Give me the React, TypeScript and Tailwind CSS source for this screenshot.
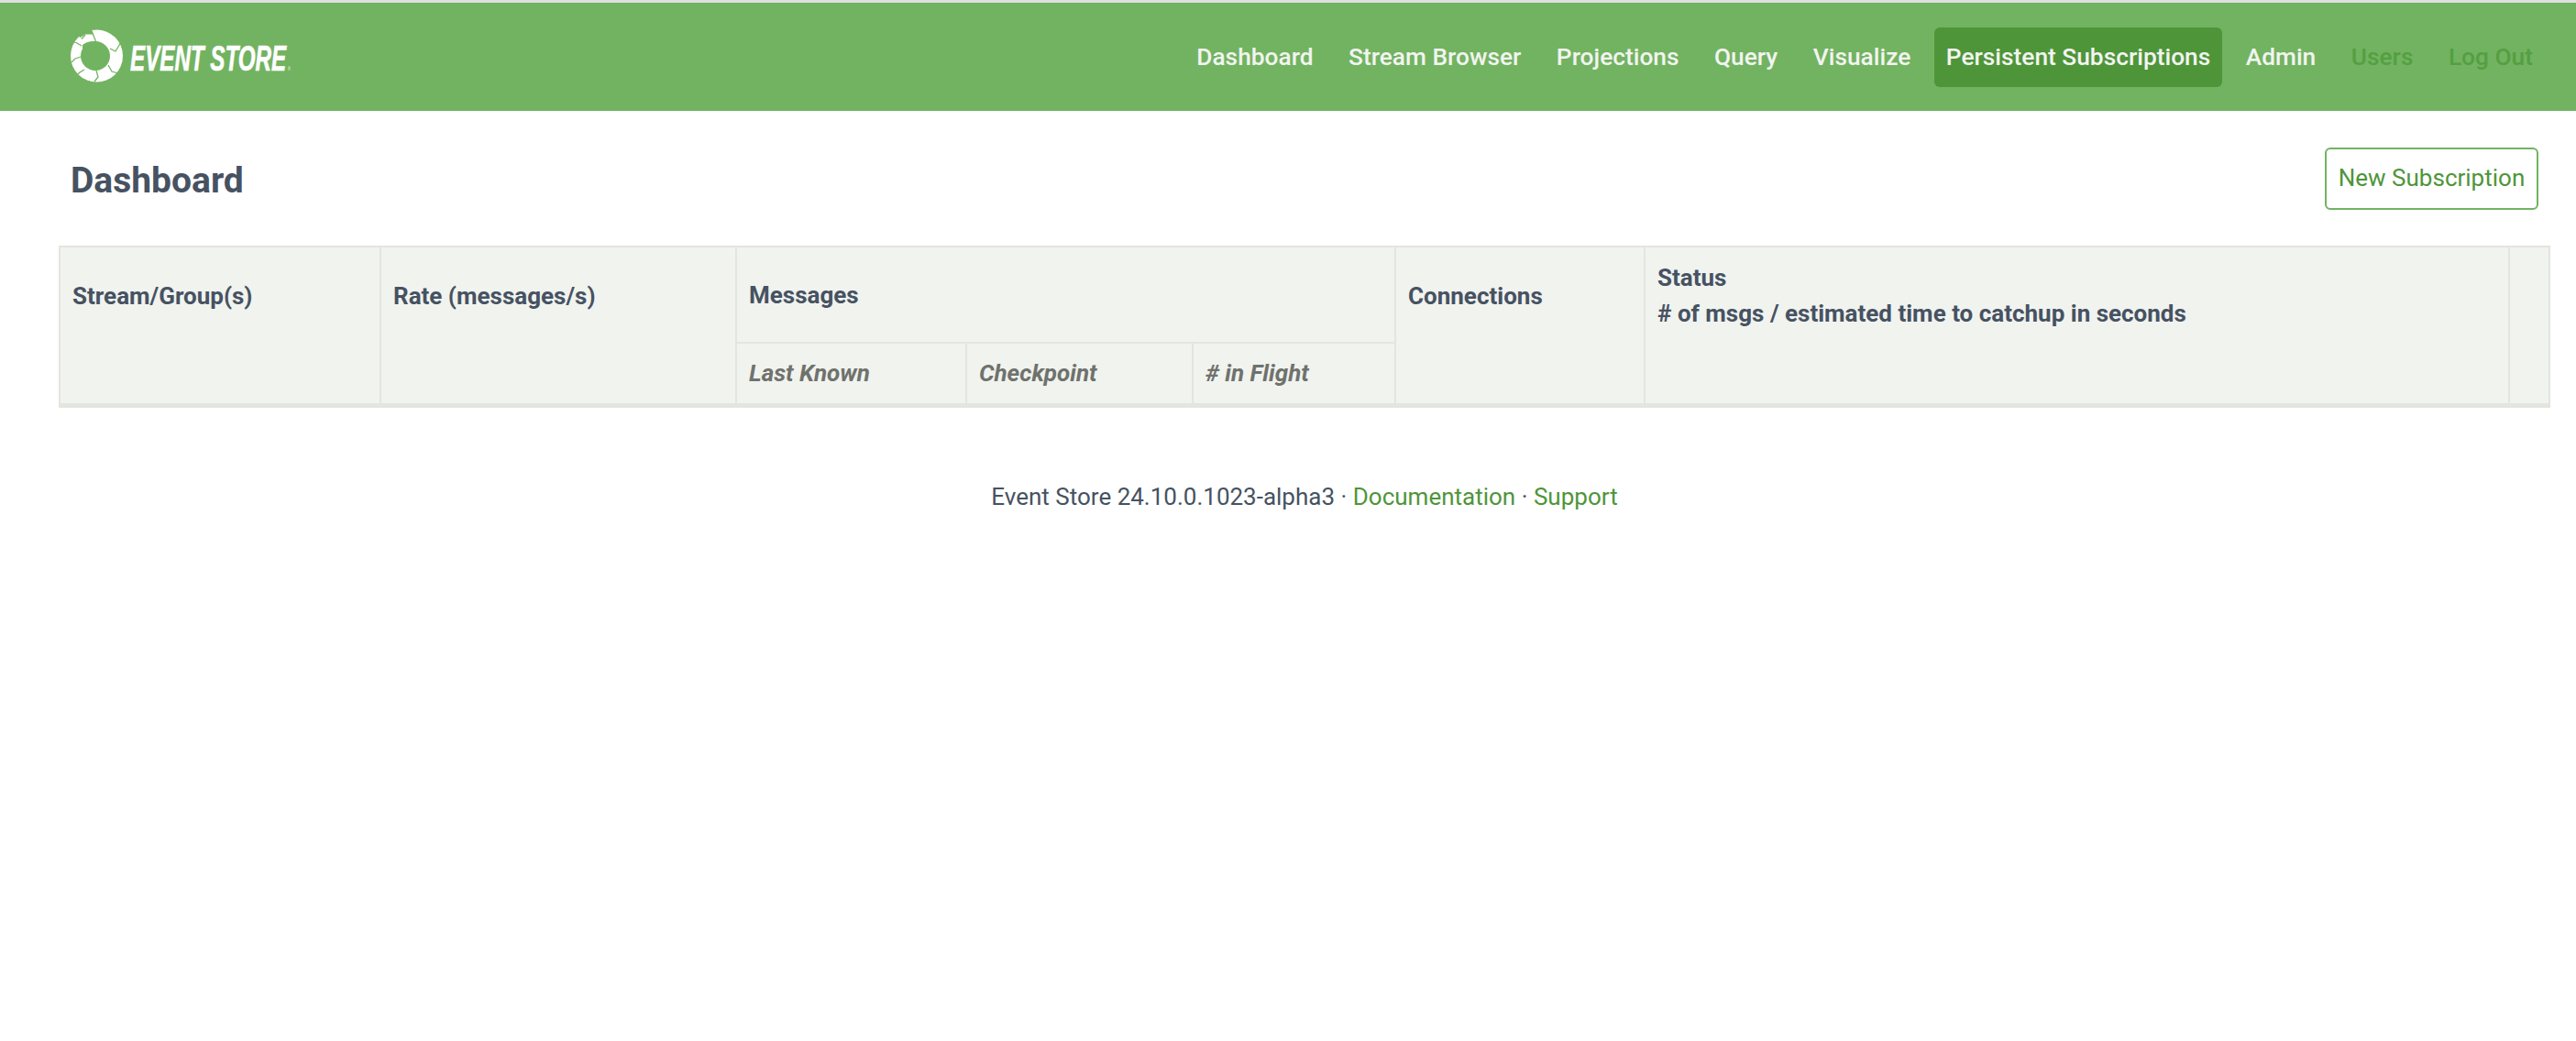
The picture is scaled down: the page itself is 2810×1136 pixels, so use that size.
const NAV = ["Dashboard", "Stream Browser", "Projections", "Query", "Visualize", "Persistent Subscriptions", "Admin", "Users", "Log Out"];

function Logo() {
  return (
    <div className="flex items-center">
      <svg width="60" height="62" viewBox="0 0 60 62" className="shrink-0">
        <circle cx="29.5" cy="30" r="28.5" fill="#ffffff" />
        <circle cx="28" cy="30" r="16" fill="#72b361" />
        {/* notch where the ring's head overlaps its tail */}
        <path d="M10 0 L23 0 L23 1 L26.5 7 L17 9 L11 12 Z" fill="#72b361" />
        <path d="M9 11.5 L17 6.5 L27 6.5 L27.5 14 L15 18 Z" fill="#ffffff" />
        <path d="M14 18 C18 14.5 23 13.5 28 14 L29 14 L28 18 L14 22 Z" fill="#72b361" />
        <g stroke="#72b361" strokeWidth="1.3" fill="none">
          <path d="M23.5 1.5 L28.5 14" />
          <path d="M17 7 L13 11.5" />
          <path d="M8 16 L5 15 M8 16 L13 19" />
          <path d="M12 31 L6 33 L2 37" />
          <path d="M16 45 L11 48 L9 50" />
          <path d="M29 46 L31 53 L27 58" />
          <path d="M42 40 L46 47 L53 49" />
          <path d="M44 22 L50 25 L56 15" />
        </g>
      </svg>
      <div className="ml-[6px] mt-[2px] w-[172px] font-['Liberation_Sans',sans-serif] text-[39px] leading-none font-bold italic whitespace-nowrap text-white origin-left scale-x-[0.62] [-webkit-text-stroke:0.7px_white]">
        EVENT STORE
        <span className="ml-[3px] text-[6px] font-normal not-italic align-baseline [-webkit-text-stroke:0]">®</span>
      </div>
    </div>
  );
}

export default function App() {
  return (
    <div className="min-h-[1136px] bg-white font-['Roboto',sans-serif] text-[#465262]">
      <header className="h-[121px] border-t-[3px] border-[#dfe0df] bg-[#72b361] pl-[76px] pr-[34px] flex items-center justify-between">
        <Logo />
        <nav className="flex items-center gap-[12.5px] text-[26.3px] font-medium">
          {NAV.map((item) => (
            <a
              key={item}
              className={`h-[65px] px-[13px] pt-[2px] flex items-center rounded-[6px] ${
                item === "Persistent Subscriptions"
                  ? "bg-[#4e9539] text-[#f2f4f0]"
                  : item === "Users" || item === "Log Out"
                  ? "text-[#549f42]"
                  : "text-[#f2f4f0]"
              }`}
            >
              {item}
            </a>
          ))}
        </nav>
      </header>

      <main className="pl-[64px] pr-[28px]">
        <div className="h-[147px] pl-[13px] pr-[13px] flex items-center justify-between">
          <h1 className="mt-[6px] text-[39px] font-bold">Dashboard</h1>
          <button className="h-[68px] w-[233px] border-2 border-[#72b361] rounded-[6px] text-[26px] text-[#4e9539]">
            New Subscription
          </button>
        </div>

        <table className="w-full table-fixed border-collapse border-b-[5px] border-[#e3e5e0] bg-[#f1f3ef] text-[26px] font-bold text-left">
          <colgroup>
            <col className="w-[350px]" />
            <col className="w-[388px]" />
            <col className="w-[251px]" />
            <col className="w-[247px]" />
            <col className="w-[221px]" />
            <col className="w-[272px]" />
            <col />
            <col className="w-[44px]" />
          </colgroup>
          <thead>
            <tr className="h-[105px]">
              <th rowSpan={2} className="border-2 border-[#e3e5e0] px-[13px] pt-[34px] align-top font-bold">Stream/Group(s)</th>
              <th rowSpan={2} className="border-2 border-[#e3e5e0] px-[13px] pt-[34px] align-top font-bold">Rate (messages/s)</th>
              <th colSpan={3} className="border-2 border-[#e3e5e0] px-[13px] pt-[2px] font-bold">Messages</th>
              <th rowSpan={2} className="border-2 border-[#e3e5e0] px-[13px] pt-[34px] align-top font-bold">Connections</th>
              <th rowSpan={2} className="border-2 border-[#e3e5e0] px-[13px] pt-[14px] align-top font-bold leading-[39px]">
                Status
                <br /># of msgs / estimated time to catchup in seconds
              </th>
              <th rowSpan={2} className="border-2 border-[#e3e5e0]"></th>
            </tr>
            <tr className="h-[68px] text-[#6f726c] italic">
              <th className="border-2 border-[#e3e5e0] px-[13px] pt-[1px] font-bold">Last Known</th>
              <th className="border-2 border-[#e3e5e0] px-[13px] pt-[1px] font-bold">Checkpoint</th>
              <th className="border-2 border-[#e3e5e0] px-[13px] pt-[1px] font-bold">
                # in Flight
              </th>
            </tr>
          </thead>
        </table>

        <footer className="mt-[78px] text-center text-[26px]">
          Event Store 24.10.0.1023-alpha3 · <a className="text-[#4e9539]">Documentation</a> · <a className="text-[#4e9539]">Support</a>
        </footer>
      </main>
    </div>
  );
}
